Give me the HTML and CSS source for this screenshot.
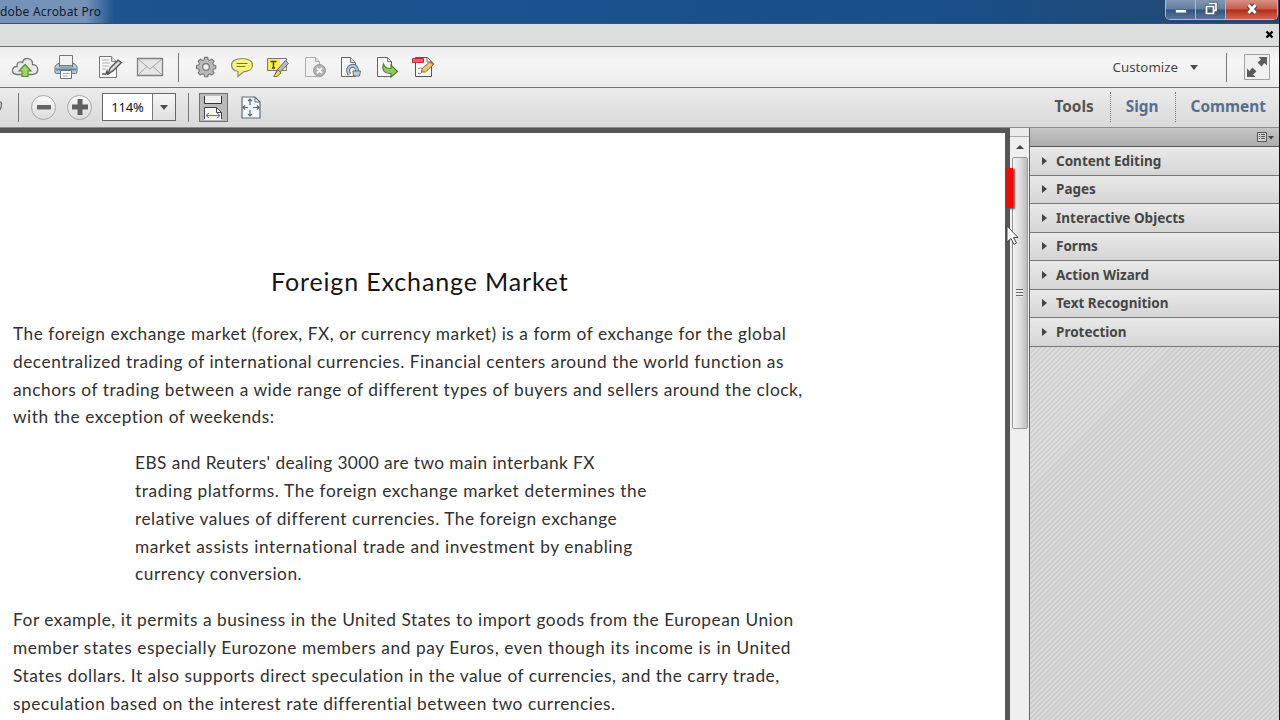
FILE: index.html
```
<!DOCTYPE html>
<html lang="en">
<head>
  <meta charset="utf-8">
  <title>Adobe Acrobat Pro</title>
  <link rel="stylesheet" href="styles.css">
</head>
<body>
  <div class="window">
    <header class="titlebar">
      <div class="title"><span>dobe Acrobat Pro</span></div>
      <div class="window-buttons">
        <button class="min" aria-label="Minimize"><svg width="14" height="16" viewBox="0 0 14 16"><path d="M1.500 9.500h11v3.500h-11z" fill="#fff" stroke="#566b88"/></svg></button>
        <button class="restore" aria-label="Restore"><svg width="14" height="16" viewBox="0 0 14 16"><path d="M5 3.500h7v7h-2M2.500 6.500h7v7h-7z" fill="none" stroke="#4b5b72" stroke-width="3.500"/><path d="M5 3.500h7v7h-2M2.500 6.500h7v7h-7z" fill="none" stroke="#fff" stroke-width="1.700"/></svg></button>
        <button class="close" aria-label="Close"><svg width="16" height="16" viewBox="0 0 16 16"><path d="M4.500 5l7 8M11.500 5l-7 8" stroke="#71383a" stroke-width="5"/><path d="M4.500 5l7 8M11.500 5l-7 8" stroke="#fff" stroke-width="2.800"/></svg></button>
      </div>
    </header>

    <div class="menubar">
      <svg width="9" height="9" viewBox="0 0 9 9"><path d="M1.500 1.500l6 6M7.500 1.500l-6 6" stroke="#000" stroke-width="2.300"/></svg>
    </div>

    <div class="toolbar main-tools">
      <div class="icons">
        <!-- upload -->
        <svg width="28" height="24" viewBox="0 0 28 24"><path d="M6 19.500C-.5 19.500.5 11.500 6 11.500 5.500 7 9.500 6 11.500 7.500 13 1.500 22 2.500 21.500 9.500 28 9.500 29 19 21.500 19.500z" fill="#e9e9e9" stroke="#777" stroke-width="1.300"/><path d="M14 9.500l6 6.500h-3v5.500h-6V16H8z" fill="#a3d65c" stroke="#5a9035" stroke-width="1.200"/></svg>
        <!-- print -->
        <svg width="26" height="26" viewBox="0 0 26 26"><path d="M6.500 1.500h13v10h-13z" fill="#f2f2f2" stroke="#777"/><path d="M3.500 10.500l3-1.500v4h13V9l3 1.500 1.500 2V18q0 1.500-1.500 1.500h-19Q2 19.500 2 18v-5.500z" fill="#b5cbdb" stroke="#607484"/><path d="M3 15.500h20" stroke="#69869b" stroke-width="2"/><path d="M7.500 16.500h11v8h-11z" fill="#fafafa" stroke="#66727c"/><path d="M9.500 19.500h7M9.500 22h5" stroke="#aaa"/></svg>
        <!-- edit -->
        <svg width="26" height="26" viewBox="0 0 26 26"><path d="M2.500 2.500h12l5 5v16h-17z" fill="#f8f8f8" stroke="#777"/><path d="M14.500 2.500v5h5" fill="#ddd" stroke="#888"/><path d="M5 6h7M5 9h8M5 12h7M5 15h4" stroke="#b0b0b0"/><path d="M5 20h4l1-3 1 3 2-1" fill="none" stroke="#555" stroke-width="1.500"/><path d="M11 20l2-6 8-8 3.500 2.500-8.500 8.500z" fill="#b0b0b0" stroke="#555" stroke-width="1.200"/><path d="M14 16l8-7.500" stroke="#eee" stroke-width="1.300"/></svg>
        <!-- mail -->
        <svg width="28" height="22" viewBox="0 0 28 22"><path d="M1.500 2.500h25v17h-25z" fill="#e6e6e6" stroke="#808080" stroke-width="1.300"/><path d="M2 3l12 10L26 3M2 19l9-8.500M26 19l-9-8.500" fill="none" stroke="#a2a2a2"/></svg>
        <i class="sep"></i>
        <!-- settings -->
        <svg width="22" height="22" viewBox="0 0 22 22"><g fill="#b9b9b9" stroke="#777" stroke-width="1.200" stroke-linejoin="round"><path d="M9.300 1.500h3.400l.5 2.500 1.900.8 2.200-1.500 2.400 2.400-1.500 2.200.8 1.900 2.500.5v3.400l-2.500.5-.8 1.900 1.500 2.200-2.400 2.400-2.200-1.500-1.900.8-.5 2.500H9.300l-.5-2.500-1.900-.8-2.200 1.500-2.400-2.400 1.500-2.200-.8-1.900-2.500-.5v-3.400L3 9.800l.8-1.900-1.500-2.200 2.400-2.400 2.200 1.500L8.800 4z" transform="translate(1 0) scale(.92)"/><circle cx="11" cy="11" r="3.300" fill="#eee"/></g></svg>
        <!-- comment -->
        <svg width="24" height="22" viewBox="0 0 24 22"><path d="M12 2.500c6 0 10.500 2.500 10.500 6.500s-4 6.500-9 6.800L8 20.500V15.500c-4-.8-6.500-3-6.500-6.500 0-4 4.500-6.500 10.500-6.500z" fill="#f4f580" stroke="#8d8d58" stroke-width="1.200"/><path d="M6.500 7.500h11M6.500 10.500h9" stroke="#77752b" stroke-width="1.200"/></svg>
        <!-- highlight -->
        <svg width="24" height="24" viewBox="0 0 24 24"><path d="M1.500 3.500h19v12h-19z" fill="#f8f8ee" stroke="#777"/><path d="M2 4h12v11H2z" fill="#f3ef55"/><path d="M4.500 6.500h6M7.500 6.500v7M6 13h3" stroke="#454500" stroke-width="1.400"/><path d="M9 19l3-5 7.500-8.500 3 3-8 8.500-3 3z" fill="#bababa" stroke="#666"/><path d="M12 15l3 3-4 3.500H7.500z" fill="#e5e150" stroke="#777324"/></svg>
        <!-- delete page -->
        <svg width="24" height="24" viewBox="0 0 24 24"><path d="M2.500 2.500h10l4 4v15h-14z" fill="#f1f1f1" stroke="#aaa"/><path d="M12.500 2.500v4h4" fill="#ddd" stroke="#aaa"/><circle cx="16.500" cy="15.500" r="6" fill="#b1b1b1" stroke="#999"/><path d="M14 13l5 5M19 13l-5 5" stroke="#f5f5f5" stroke-width="1.800"/></svg>
        <!-- rotate page -->
        <svg width="22" height="24" viewBox="0 0 22 24"><path d="M2.500 2.500h9l5 5v14h-14z" fill="#f7f7f7" stroke="#626262"/><path d="M11.500 2.500v5h5" fill="#ddd" stroke="#777"/><path d="M10.500 19.500c-6-8 7.500-13.500 7.500-3" fill="none" stroke="#607180" stroke-width="4"/><path d="M10.500 19.500c-6-8 7.500-13.500 7.500-3" fill="none" stroke="#b9cbd8" stroke-width="2"/><path d="M14 16h7.500l-1 5h-6z" fill="#b9cbd8" stroke="#607180"/></svg>
        <!-- export page -->
        <svg width="24" height="24" viewBox="0 0 24 24"><path d="M2.500 2.500h10l4 4v15h-14z" fill="#f7f7f7" stroke="#626262"/><path d="M12.500 2.500v4h4" fill="#ddd" stroke="#777"/><path d="M8.500 9c1.500 4 3.500 4.500 7.500 4.500V10l6.500 6.500L16 22v-3.500C9 18.500 6.500 15 8.500 9z" fill="#96c95c" stroke="#4b7b32" stroke-width="1.100"/></svg>
        <!-- edit pdf -->
        <svg width="24" height="24" viewBox="0 0 24 24"><path d="M4.500 2.500h12l4 4v15h-16z" fill="#fafafa" stroke="#555"/><path d="M16 3v4h4" fill="#eee" stroke="#777"/><path d="M1.500 3.500h11v4h-11z" fill="#e7606a" stroke="#b6353e"/><path d="M7 14c7-5 4 8 0 4" fill="none" stroke="#c56262"/><path d="M10.500 17l1-4 8.500-7 3 3-8.500 8z" fill="#edc66b" stroke="#8d6932"/><path d="M19.500 6.500l3 3" stroke="#a8705b" stroke-width="2"/></svg>
      </div>
      <div class="customize">
        <span>Customize</span><i class="arrow"></i><i class="sep"></i>
        <svg width="26" height="26" viewBox="0 0 26 26"><path d="M.5.500h25v25H.5z" fill="#f0f0f0" stroke="#a0a0a0"/><path d="M14.500 3H23v8.500L20.500 9l-3 3.500-4-4L17 5.500zM3 23v-8.500L5.500 17l3-3.500 4 4L9 20.500l2.500 2.500z" fill="#5c5c5c"/></svg>
      </div>
    </div>

    <div class="toolbar view-tools">
      <svg class="pen-tip" width="3" height="18" viewBox="0 0 3 18"><path d="M0 4c2 0 2 3 0 8" fill="none" stroke="#777" stroke-width="1.500"/></svg>
      <i class="sep"></i>
      <button class="round" aria-label="Zoom out"><svg width="16" height="16"><path d="M1 6h14v4.500H1z" fill="#666"/></svg></button>
      <button class="round" aria-label="Zoom in"><svg width="16" height="16"><path d="M5.500 0h5v5.500H16v5h-5.500V16h-5v-5.500H0v-5h5.500z" fill="#606060"/></svg></button>
      <div class="zoom"><span>114%</span><button aria-label="Zoom levels"><i class="arrow"></i></button></div>
      <i class="sep"></i>
      <button class="fit-width" aria-label="Fit width"><svg width="24" height="25" viewBox="0 0 24 25"><path d="M3.500 1v7.500h17V1" fill="#f0f0f0"/><path d="M3.500 1v7.500h17V1" fill="none" stroke="#333"/><path d="M3.500 12.500h12l5 5V25h-17z" fill="#f7f7f7"/><path d="M3.500 24V12.500h12l5 5V24M15.500 12.500v5h5" fill="none" stroke="#444"/><path d="M5 20.500h14M8 18l-3 2.500L8 23M16 18l3 2.500-3 2.500" fill="none" stroke="#6868a5"/></svg></button>
      <svg class="fit-page" width="20" height="23" viewBox="0 0 20 23"><path d="M1 1h13l5 5v16H1z" fill="#f3f5f7" stroke="#636c75" stroke-width="1.200"/><path d="M14 1v5h5" fill="none" stroke="#636c75"/><path d="M9 3v6M9 14v6M2 11.500h5M12 11.500h6M7 5l2-2 2 2M7 18l2 2 2-2M4 9.500l-2 2 2 2M16 9.500l2 2-2 2" fill="none" stroke="#5a6978" stroke-width="1.200"/></svg>
      <nav class="tabs">
        <a class="active">Tools</a><a>Sign</a><a>Comment</a>
      </nav>
    </div>

    <div class="workspace">
      <main class="page">
        <h1>Foreign Exchange Market</h1>
        <p>
          <span>The foreign exchange market (forex, FX, or currency market) is a form of exchange for the global</span>
          <span>decentralized trading of international currencies. Financial centers around the world function as</span>
          <span>anchors of trading between a wide range of different types of buyers and sellers around the clock,</span>
          <span>with the exception of weekends:</span>
        </p>
        <p class="quote">
          <span class="tight">EBS and Reuters' dealing 3000 are two main interbank FX</span>
          <span class="loose">trading platforms. The foreign exchange market determines the</span>
          <span>relative values of different currencies. The foreign exchange</span>
          <span class="loose">market assists international trade and investment by enabling</span>
          <span>currency conversion.</span>
        </p>
        <p>
          <span>For example, it permits a business in the United States to import goods from the European Union</span>
          <span class="loose">member states especially Eurozone members and pay Euros, even though its income is in United</span>
          <span>States dollars. It also supports direct speculation in the value of currencies, and the carry trade,</span>
          <span>speculation based on the interest rate differential between two currencies.</span>
        </p>
      </main>

      <div class="scrollbar">
        <div class="split"></div>
        <div class="up"><svg width="8" height="5"><path d="M4 0l4 4H0z" fill="#444"/></svg></div>
        <div class="thumb"><i class="grip"></i></div>
      </div>

      <aside class="sidebar">
        <div class="sidebar-head">
          <svg width="19" height="13" viewBox="0 0 19 13"><path d="M1.500 1.500h9v9h-9z" fill="#d4d4d4" stroke="#555"/><path d="M3 3.500h1M5 3.500h4M3 5.500h1M5 5.500h4M3 7.500h1M5 7.500h4" stroke="#555"/><path d="M12 5h6l-3 3.500z" fill="#444"/></svg>
        </div>
        <ul>
          <li>Content Editing</li>
          <li>Pages</li>
          <li>Interactive Objects</li>
          <li>Forms</li>
          <li>Action Wizard</li>
          <li>Text Recognition</li>
          <li>Protection</li>
        </ul>
        <div class="stripes"></div>
      </aside>
    </div>

    <div class="marker"></div>
    <svg class="cursor" width="14" height="22" viewBox="0 0 14 22"><path d="M1 1v16l4-3.500 3 6 2.500-1.500-3-5.500H12z" fill="#fff" stroke="#444"/></svg>
  </div>
</body>
</html>
```
FILE: styles.css
```
:root {
  --line: #737373;
  --text: #464646;
  --blue: #566f8d;
}

* {
  box-sizing: border-box;
}

body {
  margin: 0;
  overflow: hidden;
  font-family: "Noto Sans", sans-serif;
  color: var(--text);
}

button {
  padding: 0;
  border: 0;
}

svg {
  display: block;
  flex: none;
}

.window {
  position: relative;
  width: 1280px;
  height: 720px;
  display: flex;
  flex-direction: column;
  overflow: hidden;
  border-right: 1px solid #111;
}

.titlebar {
  flex: none;
  height: 24px;
  display: flex;
  justify-content: space-between;
  background: linear-gradient(90deg, #1e5490, #19528e 45%, #1b4d84 80%, #26476c);
  border-bottom: 1px solid #35516e;
}

.title {
  width: 114px;
  display: flex;
  align-items: center;
  font-size: 12px;
  letter-spacing: 0.2px;
  color: #101b29;
  white-space: nowrap;
  background: linear-gradient(90deg, #7593b9 75%, transparent);
}

.window-buttons {
  display: flex;
  height: 20px;
  margin-right: 1px;
  border: 1px solid #a9b8c8;
  border-top: 0;
  border-radius: 0 0 5px 5px;
  overflow: hidden;
}

.window-buttons button {
  display: flex;
  align-items: flex-start;
  justify-content: center;
  width: 30px;
  border-right: 1px solid #aab7c6;
  background: linear-gradient(#8198b3, #627e9e 48%, #30527c 52%, #5b7797);
}

.window-buttons .close {
  width: 51px;
  border: 0;
  background: linear-gradient(#d99084, #c75d4d 48%, #b52a17 52%, #ce6952);
}

.menubar {
  flex: none;
  height: 23px;
  display: flex;
  justify-content: flex-end;
  align-items: center;
  padding: 0 5px 1px 0;
  background: #dcdedd;
  border-bottom: 1px solid var(--line);
}

.toolbar {
  flex: none;
  display: flex;
  align-items: center;
}

.sep {
  flex: none;
  width: 1px;
  height: 29px;
  background: #777;
}

.arrow {
  border: 4px solid transparent;
  border-top: 5px solid #4c4c4c;
  border-bottom: 0;
}

.main-tools {
  height: 41px;
  justify-content: space-between;
  padding: 0 9px 0 4px;
  background: linear-gradient(#ebebeb, #f6f6f6 35%, #ececec);
  border-bottom: 1px solid var(--line);
}

.icons {
  display: grid;
  grid-template-columns: 42px 40px 48px 32px 24px 32px 40px 32px 42px 28px 46px 26px;
  align-items: center;
  justify-items: center;
}

.customize {
  display: flex;
  align-items: center;
  font-size: 13.3px;
}

.customize .arrow {
  margin: 0 28px 0 12px;
}

.customize svg {
  margin-left: 17px;
}

.view-tools {
  height: 40px;
  padding-bottom: 1px;
  background: linear-gradient(#ececec, #d9d9d9);
  border-bottom: 1px solid #8b8b8b;
}

.view-tools .pen-tip {
  margin-right: 15px;
}

.round {
  display: flex;
  align-items: center;
  justify-content: center;
  width: 25px;
  height: 25px;
  margin-left: 12px;
  border: 1px solid #a6a6a6;
  border-radius: 50%;
  background: linear-gradient(#fafafa, #dcdcdc);
}

.round + .round {
  margin-left: 11px;
}

.zoom {
  display: flex;
  width: 74px;
  height: 28px;
  margin: 0 12px 0 10px;
  border: 1px solid #666;
  background: #fff;
  font-size: 13px;
  letter-spacing: -0.2px;
  color: #111;
}

.zoom span {
  width: 49px;
  line-height: 26px;
  text-align: center;
}

.zoom button {
  flex: 1;
  display: flex;
  align-items: center;
  justify-content: center;
  border-left: 1px solid #777;
  background: linear-gradient(#f7f7f7, #dfdfdf);
}

.fit-width {
  width: 29px;
  height: 29px;
  margin-left: 10px;
  padding: 1px;
  border: 1px solid #707070;
  background: #bababa;
}

.fit-page {
  margin-left: 13px;
}

.tabs {
  display: flex;
  height: 30px;
  margin-left: auto;
  line-height: 30px;
  font-weight: 700;
  font-size: 15.4px;
  color: var(--blue);
}

.tabs a {
  padding: 0 16px 0 15px;
  border-left: 1px dotted #777;
}

.tabs a:last-child {
  padding-right: 13px;
}

.tabs .active {
  border: 0;
  color: #555;
}

.workspace {
  flex: 1;
  min-height: 0;
  display: flex;
}

.page {
  width: 1010px;
  padding: 131px 0 0 13px;
  overflow: hidden;
  border-top: 5px solid #565656;
  border-right: 5px solid #565656;
  background: #fff;
  color: #303030;
  font-family: Lato, sans-serif;
  font-size: 17.3px;
  line-height: 27.8px;
  letter-spacing: 0.53px;
}

.page h1 {
  margin: 0 0 22px 258px;
  font-size: 25px;
  font-weight: 400;
  line-height: 34px;
  letter-spacing: 0.86px;
  color: #151515;
  white-space: nowrap;
}

.page p {
  margin: 0 0 18px;
}

.page p span {
  display: block;
  white-space: nowrap;
}

.page .quote {
  padding-left: 122px;
}

.page .tight {
  letter-spacing: 0.42px;
}

.page .loose {
  letter-spacing: 0.59px;
}

.scrollbar {
  flex: none;
  width: 20px;
  background: #efefef;
  border-right: 1px solid #666;
}

.split {
  height: 9px;
  border-bottom: 1px solid #aaa;
  background: #ececec;
}

.up {
  height: 20px;
  display: flex;
  align-items: center;
  justify-content: center;
}

.thumb {
  width: 16px;
  height: 272px;
  margin-left: 2px;
  padding-right: 2px;
  display: flex;
  align-items: center;
  justify-content: center;
  border: 1px solid #999;
  border-radius: 2px;
  background: linear-gradient(90deg, #f3f3f3, #dedede 50%, #bcbcbc);
}

.grip {
  width: 7px;
  height: 8px;
  background: repeating-linear-gradient(#666 0 1px, #eee 1px 3px);
}

.sidebar {
  flex: 1;
  display: flex;
  flex-direction: column;
}

.sidebar-head {
  height: 19px;
  padding: 3px 4px 0 0;
  display: flex;
  justify-content: flex-end;
  background: linear-gradient(#c5c5c5, #acacac);
  border-bottom: 1px solid #555;
}

.sidebar ul {
  margin: 0;
  padding: 0;
  list-style: none;
}

.sidebar li {
  display: flex;
  align-items: center;
  height: 28.5px;
  padding: 0 0 0.4px 12px;
  border-bottom: 1px solid #777;
  background: linear-gradient(#e9e9e9, #d5d5d5);
  font-size: 13.5px;
  font-weight: 700;
}

.sidebar li::before {
  content: "";
  margin-right: 9px;
  border: 4px solid transparent;
  border-left: 5px solid #444;
  border-right: 0;
}

.stripes {
  flex: 1;
  background: repeating-linear-gradient(135deg, #cecece 0 2px, #dcdcdc 2px 3.54px);
}

/* red callout edge and mouse pointer lie over the scrollbar */
.marker {
  position: absolute;
  left: 1006px;
  top: 168px;
  width: 7px;
  height: 40px;
  background: #ea0d09;
  box-shadow: 2px 1px 2px #555;
}

.cursor {
  position: absolute;
  left: 1006px;
  top: 225px;
}
```
